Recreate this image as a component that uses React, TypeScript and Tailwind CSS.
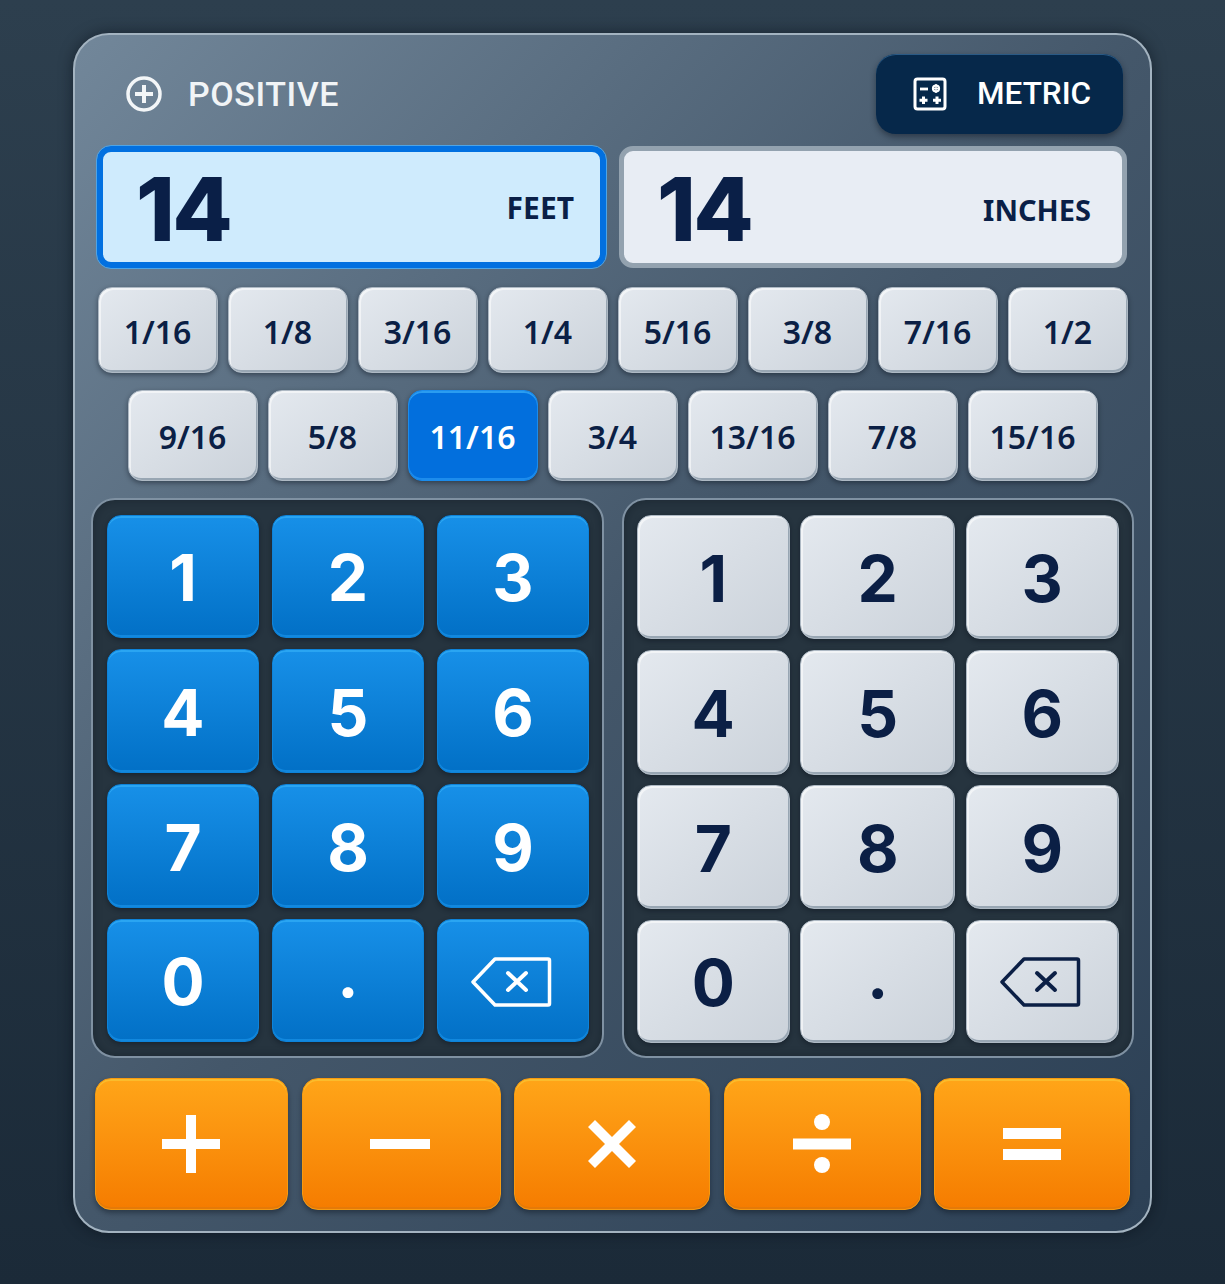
import React from 'react';

const row1 = ['1/16', '1/8', '3/16', '1/4', '5/16', '3/8', '7/16', '1/2'];
const row2 = ['9/16', '5/8', '11/16', '3/4', '13/16', '7/8', '15/16'];
const digits = ['1', '2', '3', '4', '5', '6', '7', '8', '9', '0', '.'];

const lightKey =
  'bg-gradient-to-br from-[#e4e9ef] to-[#cbd2da] text-[#0b1f45] border border-[#aeb9c4] shadow-[inset_2px_2px_0_rgba(255,255,255,0.55),inset_-1px_-2px_0_#98a6b3,0_2px_5px_rgba(8,16,26,0.45)]';
const blueKey =
  'bg-gradient-to-b from-[#1790e8] to-[#0270c6] text-white border border-[#0d83da] shadow-[inset_0_2px_0_#2aa5f2,inset_0_-2px_0_#1288de,0_2px_5px_rgba(8,16,26,0.45)]';
const activeKey =
  'bg-[#026fdd] text-white border border-[#1b8cec] shadow-[inset_0_2px_0_#2a9cf0,inset_0_-2px_0_#1d8cec,0_2px_5px_rgba(8,16,26,0.45)]';
const orangeKey =
  'bg-gradient-to-b from-[#ffa518] to-[#f57c00] border border-[#f79a10] shadow-[inset_0_2px_0_#fbbc2c,inset_0_-2px_0_#e57a08,0_3px_5px_rgba(8,16,26,0.4)]';

const BackspaceIcon = () => (
  <svg width="82" height="52" viewBox="0 0 82 52" fill="none" stroke="currentColor" className="-translate-x-[2px] translate-y-[1px]">
    <path d="M3 26 L25 3 H78 Q79.500 3 79.500 4.500 V47.500 Q79.500 49 78 49 H25 Z" strokeWidth="3.500" strokeLinejoin="round" />
    <path d="M38 17 L56 34 M56 17 L38 34" strokeWidth="4" strokeLinecap="round" />
  </svg>
);

const PlusCircleIcon = () => (
  <svg width="38" height="38" viewBox="0 0 38 38" fill="none" stroke="#f3f6f8">
    <circle cx="19" cy="19" r="16" strokeWidth="3.500" />
    <path d="M19 10 V28 M10 19 H28" strokeWidth="4" />
  </svg>
);

const MetricIcon = () => (
  <svg width="34" height="34" viewBox="0 0 34 34" fill="none" stroke="#fff" className="-translate-x-[1px]">
    <rect x="2" y="2" width="30" height="30" rx="2.500" strokeWidth="3" />
    <path d="M7 12 H15" strokeWidth="2.800" />
    <circle cx="23" cy="11.500" r="3" strokeWidth="2.200" />
    <path d="M23 7 V16 M19 11.500 H27" strokeWidth="1.500" />
    <path d="M10.500 19.500 V27 M6.500 23.200 H14.500 M24 19.500 V27 M20 23.200 H28" strokeWidth="3" />
  </svg>
);

const ops = [
  <svg key="plus" width="58" height="58" viewBox="0 0 58 58" fill="#fff" className="-translate-x-[1px]">
    <rect x="0" y="24" width="58" height="10" />
    <rect x="24" y="0" width="10" height="58" />
  </svg>,
  <svg key="minus" width="60" height="12" viewBox="0 0 60 12" fill="#fff" className="-translate-x-[1px]">
    <rect x="0" y="1" width="60" height="10" />
  </svg>,
  <svg key="times" width="48" height="48" viewBox="0 0 48 48" fill="#fff">
    <path d="M7 0 L24 17 L41 0 L48 7 L31 24 L48 41 L41 48 L24 31 L7 48 L0 41 L17 24 L0 7 Z" />
  </svg>,
  <svg key="divide" width="58" height="60" viewBox="0 0 58 60" fill="#fff">
    <circle cx="29" cy="8" r="8" />
    <rect x="0" y="24.500" width="58" height="11" />
    <circle cx="29" cy="51" r="8" />
  </svg>,
  <svg key="equals" width="58" height="32" viewBox="0 0 58 32" fill="#fff">
    <rect x="0" y="0" width="58" height="11" />
    <rect x="0" y="21" width="58" height="11" />
  </svg>
];

type KeypadProps = {
  keyClass: string;
  gridClass: string;
};

const Keypad: React.FC<KeypadProps> = ({ keyClass, gridClass }) => (
  <div className="flex h-[560px] flex-1 justify-center rounded-[24px] border-2 border-[#7f91a2] bg-[#26343f] pt-[15px] shadow-[inset_0_0_10px_rgba(10,18,26,0.35)]">
    <div className={gridClass}>
      {digits.map((d) => (
        <button key={d} className={`flex items-center justify-center rounded-[14px] pt-[3px] text-[64px] font-[750] leading-none ${keyClass}`}>
          {d === '.' ? <span className="-translate-y-[8px]">.</span> : d}
        </button>
      ))}
      <button className={`flex items-center justify-center rounded-[14px] ${keyClass}`}>
        <BackspaceIcon />
      </button>
    </div>
  </div>
);

const App: React.FC = () => {
  return (
    <div className="h-[1284px] w-[1225px] overflow-hidden bg-gradient-to-b from-[#2d3f4e] to-[#1b2a38] pl-[73px] pt-[33px] font-['Inter',sans-serif]">
      <div className="h-[1200px] w-[1079px] rounded-[36px] border-2 border-[#a3b3c0] bg-gradient-to-br from-[#72879a] via-[#44576a] to-[#2c4055] px-[16px] pt-[19px] shadow-[0_0_14px_rgba(6,12,20,0.5)]">
        <div className="flex h-[80px] items-center justify-between pl-[34px] pr-[11px]">
          <div className="flex items-center gap-[25px] text-[#f1f4f6]">
            <PlusCircleIcon />
            <span className="font-['Roboto',sans-serif] text-[34px] font-medium tracking-[0.6px]">POSITIVE</span>
          </div>
          <button className="flex h-[80px] w-[247px] items-center gap-[29px] rounded-[20px] bg-[#06284a] pl-[38px] text-white shadow-[inset_0_1px_0_#2a5a85,0_3px_6px_rgba(8,16,26,0.45)]">
            <MetricIcon />
            <span className="font-['Roboto',sans-serif] text-[31.500px] font-medium">METRIC</span>
          </button>
        </div>

        <div className="mx-[6px] mt-[12px] flex gap-[13px]">
          <div className="flex h-[122px] w-[509px] items-center justify-between rounded-[14px] border-[6px] border-[#0270e0] bg-[#cfebfd] pl-[33px] pr-[26px] text-[#0a1f47] outline outline-1 outline-[#4ea4e6]">
            <span className="pt-[4px] text-[88px] font-extrabold leading-none tracking-[-2.500px]">14</span>
            <span className="font-['Noto_Sans',sans-serif] text-[30px] font-bold">FEET</span>
          </div>
          <div className="flex h-[122px] w-[508px] items-center justify-between rounded-[14px] border-[5px] border-[#93a2af] bg-[#e8edf4] pl-[33px] pr-[31px] text-[#0a1f47]">
            <span className="pt-[4px] text-[88px] font-extrabold leading-none tracking-[-2.500px]">14</span>
            <span className="pt-[6px] font-['Noto_Sans',sans-serif] text-[29px] font-bold">INCHES</span>
          </div>
        </div>

        <div className="mx-[6px] mt-[19px] flex justify-center gap-[10px]">
          {row1.map((f) => (
            <button key={f} className={`h-[86px] w-[120px] rounded-[14px] pt-[3px] font-['Noto_Sans',sans-serif] text-[32px] font-semibold ${lightKey}`}>
              {f}
            </button>
          ))}
        </div>

        <div className="mx-[6px] mt-[17px] flex justify-center gap-[10px]">
          {row2.map((f) => (
            <button key={f} className={`h-[91px] w-[130px] rounded-[14px] pt-[3px] font-['Noto_Sans',sans-serif] text-[32px] font-semibold ${f === '11/16' ? activeKey : lightKey}`}>
              {f}
            </button>
          ))}
        </div>

        <div className="mt-[17px] flex gap-[18px]">
          <Keypad
            keyClass={blueKey}
            gridClass="ml-[1.500px] grid h-[527px] grid-cols-[152px_152px_152px] grid-rows-[123px_124px_124px_123px] gap-x-[13px] gap-y-[11px]"
          />
          <Keypad
            keyClass={lightKey}
            gridClass="grid h-[527px] grid-cols-[153px_155px_153px] grid-rows-[124px_125px_124px_123px] gap-x-[10.500px] gap-y-[10.500px]"
          />
        </div>

        <div className="mx-[4px] mt-[20px] grid grid-cols-[193px_199px_196px_197px_196px] gap-x-[13.500px]">
          {ops.map((icon, i) => (
            <button key={i} className={`flex h-[132px] items-center justify-center rounded-[16px] ${orangeKey}`}>
              {icon}
            </button>
          ))}
        </div>
      </div>
    </div>
  );
};

export default App;
